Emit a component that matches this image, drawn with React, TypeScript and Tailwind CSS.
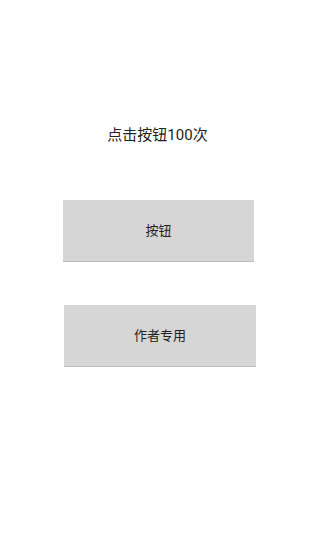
export default function App() {
  return (
    <div
      className="flex h-[560px] w-[315px] flex-col bg-white text-[#222222]"
      style={{ fontFamily: 'Roboto, "Noto Sans CJK SC", sans-serif' }}
    >
      <div className="mt-[125px] h-[20px] text-center text-[15px] leading-[20px]">点击按钮100次</div>
      <button className="ml-[63px] mt-[55px] flex h-[62px] w-[191px] items-center justify-center border-b border-[#bdbdbd] bg-[#d6d6d6] text-[13px] text-[#222222]">
        按钮
      </button>
      <button className="ml-[64px] mt-[43px] flex h-[62px] w-[192px] items-center justify-center border-b border-[#bdbdbd] bg-[#d6d6d6] text-[13px] text-[#222222]">
        作者专用
      </button>
    </div>
  );
}
